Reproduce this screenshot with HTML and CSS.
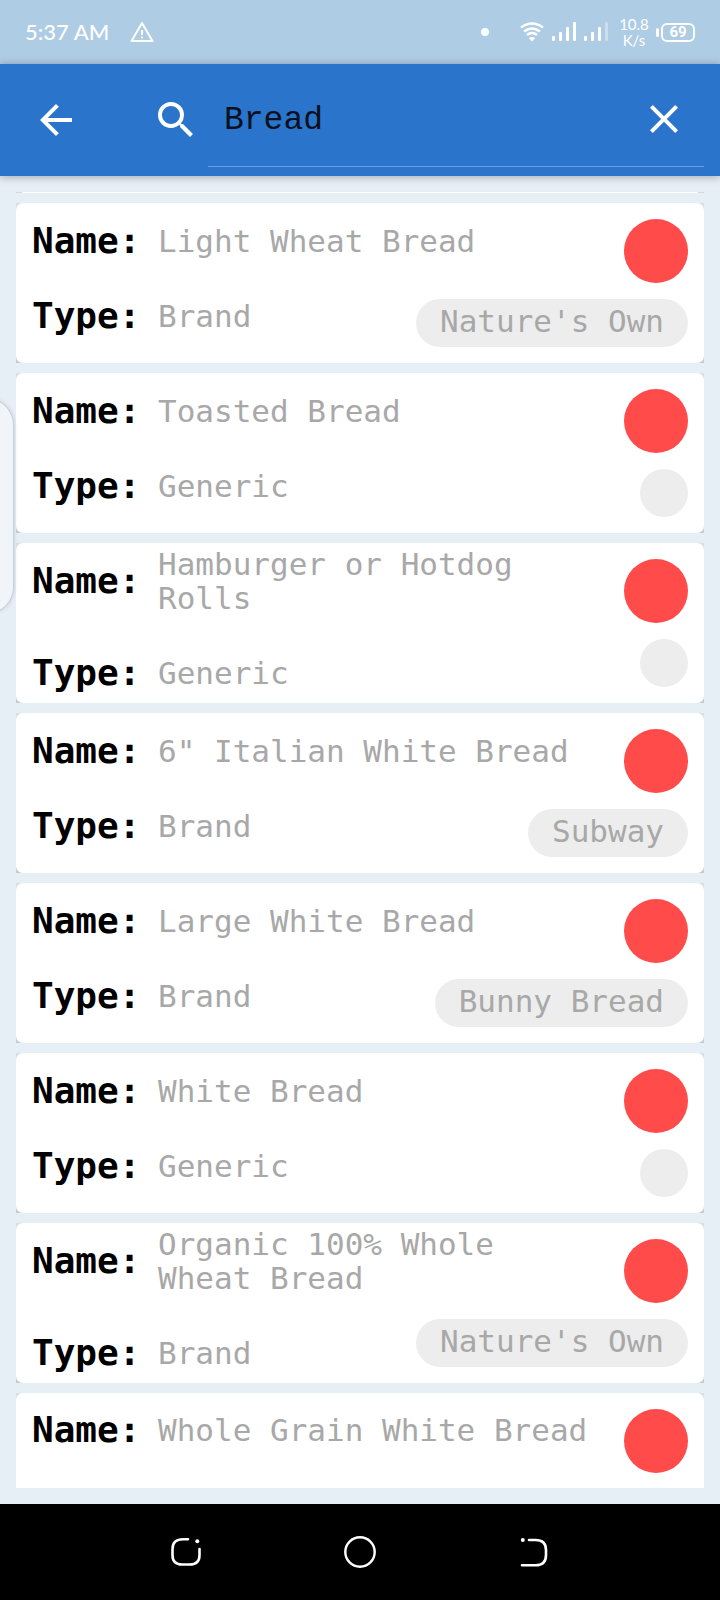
FILE: index.html
```
<!DOCTYPE html>
<html lang="en">
<head>
<meta charset="utf-8">
<meta name="viewport" content="width=device-width, initial-scale=1">
<title>Food search</title>
<link rel="stylesheet" href="styles.css">
</head>
<body>
<div class="screen">
  <div class="status">
    <span class="time">5:37 AM</span>
    <svg class="warn" width="24" height="22" viewBox="0 0 24 22" fill="none" stroke="#fff" stroke-width="2" stroke-linejoin="round"><path d="M12 2 22.500 20H1.500Z"/><path d="M12 9v5M12 15.500v2"/></svg>
    <span class="dot"></span>
    <svg class="wifi" width="24" height="20" viewBox="0 0 24 20" fill="none" stroke="#fff" stroke-width="2.400"><path d="M1 5.500Q12-2.500 23 5.500M4 9.500Q12 3.500 20 9.500M7 13Q12 9 17 13"/><path d="M12 19.500 8.800 16.300Q12 13.700 15.200 16.300Z" fill="#fff" stroke="none"/></svg>
    <svg class="signal" width="24" height="20" viewBox="0 0 24 20" fill="#fff"><rect y="14" width="3" height="5" rx="1"/><rect x="7" y="10" width="3" height="9" rx="1"/><rect x="14" y="5" width="3" height="14" rx="1"/><rect x="21" width="3" height="19" rx="1"/></svg>
    <svg class="signal" width="24" height="20" viewBox="0 0 24 20" fill="#fff"><rect y="14" width="3" height="5" rx="1"/><rect x="7" y="10" width="3" height="9" rx="1"/><rect x="14" y="5" width="3" height="14" rx="1"/><rect x="21" width="3" height="19" rx="1" opacity=".35"/></svg>
    <span class="speed">10.8<br>K/s</span>
    <span class="battery">69</span>
  </div>

  <header class="bar">
    <button class="icon-btn" type="button" aria-label="Back"><svg width="48" height="48" viewBox="0 0 24 24" fill="#fff"><path d="M20 11H7.830l5.590-5.590L12 4l-8 8 8 8 1.410-1.410L7.830 13H20v-2z"/></svg></button>
    <form class="search" role="search">
      <label for="q" aria-label="Search"><svg width="48" height="48" viewBox="0 0 24 24" fill="#fff"><path d="M15.500 14h-.79l-.28-.27A6.471 6.471 0 0 0 16 9.500 6.500 6.500 0 1 0 9.500 16c1.610 0 3.090-.59 4.230-1.570l.27.28v.79l5 4.990L20.490 19l-4.990-5zm-6 0C7.010 14 5 11.990 5 9.500S7.010 5 9.500 5 14 7.010 14 9.500 11.990 14 9.500 14z"/></svg></label>
      <div class="field">
        <input id="q" type="text" value="Bread" autocomplete="off">
        <button class="icon-btn" type="reset" aria-label="Clear"><svg width="48" height="48" viewBox="0 0 24 24" fill="#fff"><path d="M19 6.410 17.590 5 12 10.590 6.410 5 5 6.410 10.590 12 5 17.590 6.410 19 12 13.410 17.590 19 19 17.590 13.410 12z"/></svg></button>
      </div>
    </form>
  </header>

  <main class="content">
    <ul class="list">
      <li class="item sliver"><div class="card"></div></li>
      <li class="item"><div class="card">
        <dl class="info"><div class="row"><dt>Name:</dt><dd>Light Wheat Bread</dd></div><div class="row"><dt>Type:</dt><dd>Brand</dd></div></dl>
        <div class="side"><span class="mark"></span><span class="chip">Nature's Own</span></div>
      </div></li>
      <li class="item"><div class="card">
        <dl class="info"><div class="row"><dt>Name:</dt><dd>Toasted Bread</dd></div><div class="row"><dt>Type:</dt><dd>Generic</dd></div></dl>
        <div class="side"><span class="mark"></span><span class="chip"></span></div>
      </div></li>
      <li class="item"><div class="card">
        <dl class="info"><div class="row"><dt>Name:</dt><dd>Hamburger or Hotdog Rolls</dd></div><div class="row"><dt>Type:</dt><dd>Generic</dd></div></dl>
        <div class="side"><span class="mark"></span><span class="chip"></span></div>
      </div></li>
      <li class="item"><div class="card">
        <dl class="info"><div class="row"><dt>Name:</dt><dd>6" Italian White Bread</dd></div><div class="row"><dt>Type:</dt><dd>Brand</dd></div></dl>
        <div class="side"><span class="mark"></span><span class="chip">Subway</span></div>
      </div></li>
      <li class="item"><div class="card">
        <dl class="info"><div class="row"><dt>Name:</dt><dd>Large White Bread</dd></div><div class="row"><dt>Type:</dt><dd>Brand</dd></div></dl>
        <div class="side"><span class="mark"></span><span class="chip">Bunny Bread</span></div>
      </div></li>
      <li class="item"><div class="card">
        <dl class="info"><div class="row"><dt>Name:</dt><dd>White Bread</dd></div><div class="row"><dt>Type:</dt><dd>Generic</dd></div></dl>
        <div class="side"><span class="mark"></span><span class="chip"></span></div>
      </div></li>
      <li class="item"><div class="card">
        <dl class="info"><div class="row"><dt>Name:</dt><dd>Organic 100% Whole Wheat Bread</dd></div><div class="row"><dt>Type:</dt><dd>Brand</dd></div></dl>
        <div class="side"><span class="mark"></span><span class="chip">Nature's Own</span></div>
      </div></li>
      <li class="item"><div class="card">
        <dl class="info last"><div class="row"><dt>Name:</dt><dd>Whole Grain White Bread</dd></div></dl>
        <div class="side"><span class="mark"></span></div>
      </div></li>
    </ul>
  </main>
  <div class="edge-handle"></div>

  <nav class="nav">
    <button class="nav-btn" type="button" aria-label="Recent apps"><svg width="32" height="32" viewBox="0 0 32 32" fill="none" stroke="#fff" stroke-width="2.600" stroke-linecap="round"><path d="M18 3.300H13Q2.500 3.300 2.500 13V19Q2.500 28.500 12 28.500H20Q29.500 28.500 29.500 19V13"/><circle cx="27.300" cy="5.200" r="2" fill="#fff" stroke="none"/></svg></button>
    <button class="nav-btn" type="button" aria-label="Home"><svg width="32" height="32" viewBox="0 0 32 32" fill="none" stroke="#fff" stroke-width="2.400"><circle cx="16" cy="16" r="14.700"/></svg></button>
    <button class="nav-btn" type="button" aria-label="Back"><svg width="32" height="32" viewBox="0 0 32 32" fill="none" stroke="#fff" stroke-width="2.600" stroke-linecap="round"><path d="M11 4H17.500Q28 4 28 14V19Q28 29.300 17.500 29.300H4"/><circle cx="4.800" cy="4" r="2" fill="#fff" stroke="none"/></svg></button>
  </nav>
</div>
</body>
</html>
```
FILE: styles.css
```
* { box-sizing: border-box; }
body {
  margin: 0;
  background: #e6eef6;
  font-family: "DejaVu Sans Mono", monospace;
}
button { padding: 0; border: 0; background: none; cursor: pointer; }
svg { display: block; }
ul, dl, dd { margin: 0; padding: 0; list-style: none; }

.screen { position: relative; display: flex; flex-direction: column; height: 100vh; }

.status {
  flex: none;
  display: flex;
  align-items: center;
  height: 64px;
  padding: 0 25px;
  background: #aecce4;
  color: #fff;
  font-family: Lato, sans-serif;
}
.time { font-size: 22px; line-height: 24px; font-weight: 500; }
.warn { margin-left: 21px; }
.dot { width: 8px; height: 8px; margin-left: auto; border-radius: 50%; background: #fff; }
.wifi { margin-left: 31px; }
.signal { margin-left: 8px; }
.speed { width: 32px; margin-left: 10px; text-align: center; font-size: 15px; line-height: 16px; }
.battery {
  position: relative;
  width: 34px;
  height: 19px;
  margin-left: 11px;
  border: 2px solid #fff;
  border-radius: 6px;
  text-align: center;
  font: 700 15px/15px Roboto, sans-serif;
}
.battery::before {
  content: "";
  position: absolute;
  left: -7px;
  top: 3px;
  width: 3px;
  height: 9px;
  border-radius: 2px;
  background: #fff;
}

.bar {
  flex: none;
  display: flex;
  align-items: center;
  gap: 72px;
  height: 112px;
  padding: 0 16px 0 32px;
  background: #2a74cc;
  box-shadow: 0 1px 8px rgba(0, 0, 0, .3);
}
.search { flex: 1; display: flex; align-items: center; gap: 8px; height: 100%; min-width: 0; }
.field {
  flex: 1;
  align-self: stretch;
  display: flex;
  align-items: center;
  min-width: 0;
  margin: 8px 0 9px;
  padding: 0 16px;
  border-bottom: 1px solid #6a9edb;
}
.field input {
  flex: 1;
  min-width: 0;
  padding: 4px 0 0;
  border: 0;
  outline: 0;
  background: none;
  color: #07111e;
  font: 33px/40px "Liberation Mono", monospace;
}

.content { flex: 1; min-height: 0; padding: 16px; }
.list { display: flex; flex-direction: column; gap: 10px; height: 100%; overflow: hidden; }
.item { flex: none; background: linear-gradient(#d8e0e7, #c5ccd3); }
.card { display: grid; min-height: 160px; border-radius: 7px; background: #fff; }
.sliver { height: 1px; overflow: hidden; background: #d0d7de; }
.sliver .card { min-height: 1px; height: 1px; margin: 0 6px; border-radius: 0; }
.info {
  grid-area: 1 / 1;
  display: flex;
  flex-direction: column;
  justify-content: center;
  gap: 41px;
  padding: 0 106px 10px 16px;
}
.last { justify-content: flex-start; padding-top: 20px; }
.row { display: flex; align-items: center; line-height: 34px; }
.row dt { flex: none; width: 126px; font-size: 36px; font-weight: 700; color: #000; }
.row dd { font-size: 31px; color: #a8a8a8; }
.side {
  grid-area: 1 / 1;
  justify-self: end;
  display: flex;
  flex-direction: column;
  align-items: flex-end;
  gap: 16px;
  padding: 16px;
}
.mark { width: 64px; height: 64px; border-radius: 50%; background: #ff4b4a; }
.chip {
  height: 48px;
  padding: 0 24px;
  border-radius: 24px;
  background: #ededed;
  color: #a8a8a8;
  font-size: 31px;
  line-height: 44px;
}

.edge-handle {
  position: absolute;
  left: -40px;
  top: 398px;
  width: 54px;
  height: 216px;
  border: 1px solid #c8ced5;
  border-radius: 27px;
  background: #f0f5fa;
  box-shadow: 0 0 4px rgba(0, 0, 0, .15);
}

.nav {
  flex: none;
  display: flex;
  align-items: center;
  justify-content: center;
  gap: 142px;
  height: 96px;
  background: #000;
}
```
